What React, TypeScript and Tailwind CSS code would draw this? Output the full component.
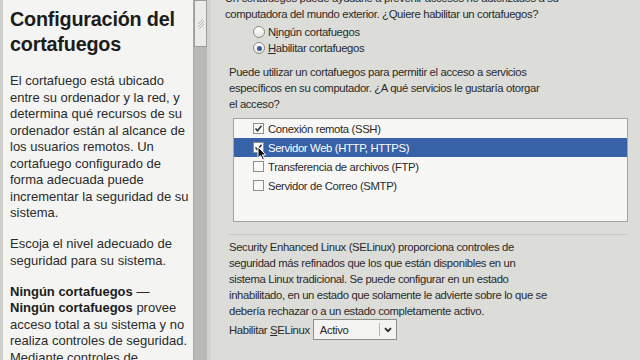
import React from "react"

const services = [
  { name: "Conexión remota (SSH)", checked: true },
  { name: "Servidor Web (HTTP, HTTPS)", checked: true, selected: true },
  { name: "Transferencia de archivos (FTP)", checked: false },
  { name: "Servidor de Correo (SMTP)", checked: false },
]

function Check({ checked }: { checked: boolean }) {
  return (
    <span className="flex h-[11px] w-[11px] items-center justify-center border border-[#8d8d8a] bg-[#fbfbfa]">
      {checked && (
        <svg width="9" height="9" viewBox="0 0 9 9">
          <path d="M1.5 4.5 L3.5 6.8 L7.5 1.8" fill="none" stroke="#2e3436" strokeWidth="1.6" />
        </svg>
      )}
    </span>
  )
}

function Radio({ checked }: { checked: boolean }) {
  return (
    <span className="flex h-[12px] w-[12px] items-center justify-center rounded-full border border-[#8a8a87] bg-gradient-to-b from-[#ffffff] to-[#e4e4e2]">
      {checked && <span className="h-[5px] w-[5px] rounded-full bg-[#3b5f95]" />}
    </span>
  )
}

export default function App() {
  return (
    <div
      className="flex h-[360px] w-[640px] overflow-hidden bg-[#dcddd9] text-[#2a2a2a]"
      style={{ fontFamily: '"Liberation Sans", Arial, sans-serif' }}
    >
      {/* help panel */}
      <div className="w-[194px] shrink-0 overflow-hidden whitespace-nowrap border-l-[3px] border-r border-l-[#cdceca] border-r-[#a9aaa6] bg-[#f4f5f2] pl-[7px] pt-[7px]">
        <h1 className="text-[19.8px] font-bold leading-[25px] tracking-[-0.2px] text-[#1c1c1c]">
          Configuración del
          <br />
          cortafuegos
        </h1>
        <div className="mt-[16px] space-y-[14.5px] text-[13px] leading-[16.5px] text-[#2b2b2b]">
          <p>
            El cortafuego está ubicado
            <br />
            entre su ordenador y la red, y
            <br />
            determina qué recursos de su
            <br />
            ordenador están al alcance de
            <br />
            los usuarios remotos. Un
            <br />
            cortafuego configurado de
            <br />
            forma adecuada puede
            <br />
            incrementar la seguridad de su
            <br />
            sistema.
          </p>
          <p>
            Escoja el nivel adecuado de
            <br />
            seguridad para su sistema.
          </p>
          <p>
            <b className="text-[#1c1c1c]">Ningún cortafuegos</b> —
            <br />
            <b className="text-[#1c1c1c]">Ningún cortafuegos</b> provee
            <br />
            acceso total a su sistema y no
            <br />
            realiza controles de seguridad.
            <br />
            Mediante controles de
          </p>
        </div>
      </div>

      {/* scrollbar */}
      <div className="flex w-[13px] shrink-0 flex-col bg-[#b9bab6]">
        <div className="flex h-[47px] flex-col items-center justify-center border border-[#9c9d99] bg-[#ebebe9]">
          <svg width="8" height="12" viewBox="0 0 8 12">
            <path d="M1 6 L6 1 M1 9 L7 3 M2 11 L7 6" stroke="#b4b5b1" strokeWidth="1" />
          </svg>
        </div>
      </div>
      <div className="w-[4px] shrink-0 bg-[#d2d3cf]" />

      {/* main content */}
      <div className="flex-1 whitespace-nowrap pl-[14px] pr-[12px] text-[11.3px] leading-[16px] tracking-[-0.35px] text-[#2a2a2a]">
        <div className="-mt-[10px]">
          <p>
            Un cortafuegos puede ayudarle a prevenir accesos no autorizados a su
            <br />
            computadora del mundo exterior. ¿Quiere habilitar un cortafuegos?
          </p>
          <div className="mt-[2px] flex flex-col pl-[28px]">
            <label className="flex h-[16px] items-center gap-[3px]">
              <Radio checked={false} />
              <span>
                N<u>i</u>ngún cortafuegos
              </span>
            </label>
            <label className="flex h-[16px] items-center gap-[3px]">
              <Radio checked />
              <span>
                <u>H</u>abilitar cortafuegos
              </span>
            </label>
          </div>
          <p className="mt-[8px] pl-[4px]">
            Puede utilizar un cortafuegos para permitir el acceso a servicios
            <br />
            específicos en su computador. ¿A qué servicios le gustaría otorgar
            <br />
            el acceso?
          </p>

          {/* services list */}
          <div className="relative ml-[8px] mt-[6px] h-[104px] border border-[#a3a4a0] bg-[#f7f8f5]">
            {services.map((s) => (
              <div
                key={s.name}
                className={`flex h-[19px] items-center gap-[4px] pl-[19px] ${
                  s.selected ? "bg-[#3762a8] text-white" : ""
                }`}
              >
                <Check checked={s.checked} />
                <span>{s.name}</span>
              </div>
            ))}
            {/* mouse pointer */}
            <svg className="absolute left-[23px] top-[27px]" width="10" height="15" viewBox="0 0 10 15">
              <path d="M1 1 L1 12 L3.6 9.6 L5.6 14 L7.4 13.2 L5.4 8.9 L8.8 8.9 Z" fill="#111" stroke="#fff" strokeWidth="1" />
            </svg>
          </div>

          <div className="ml-[3px] mt-[12px] border-t border-[#c9cac6]" />

          <p className="mt-[4px] pl-[4px]">
            Security Enhanced Linux (SELinux) proporciona controles de
            <br />
            seguridad más refinados que los que están disponibles en un
            <br />
            sistema Linux tradicional. Se puede configurar en un estado
            <br />
            inhabilitado, en un estado que solamente le advierte sobre lo que se
            <br />
            debería rechazar o a un estado completamente activo.
          </p>

          <div className="mt-[0px] flex items-center gap-[3px] pl-[4px]">
            <span>
              Habilitar <u>S</u>ELinux
            </span>
            <div className="flex h-[21px] w-[84px] items-center border border-[#8e8f8b] bg-[#f3f3f1] pl-[6px]">
              <span className="flex-1">Activo</span>
              <span className="h-[13px] border-l border-[#b5b6b2]" />
              <svg className="mx-[4px]" width="8" height="6" viewBox="0 0 8 6">
                <path d="M1 1.2 L4 4.2 L7 1.2" fill="none" stroke="#2a2a2a" strokeWidth="1.8" />
              </svg>
            </div>
          </div>
        </div>
      </div>
    </div>
  )
}
